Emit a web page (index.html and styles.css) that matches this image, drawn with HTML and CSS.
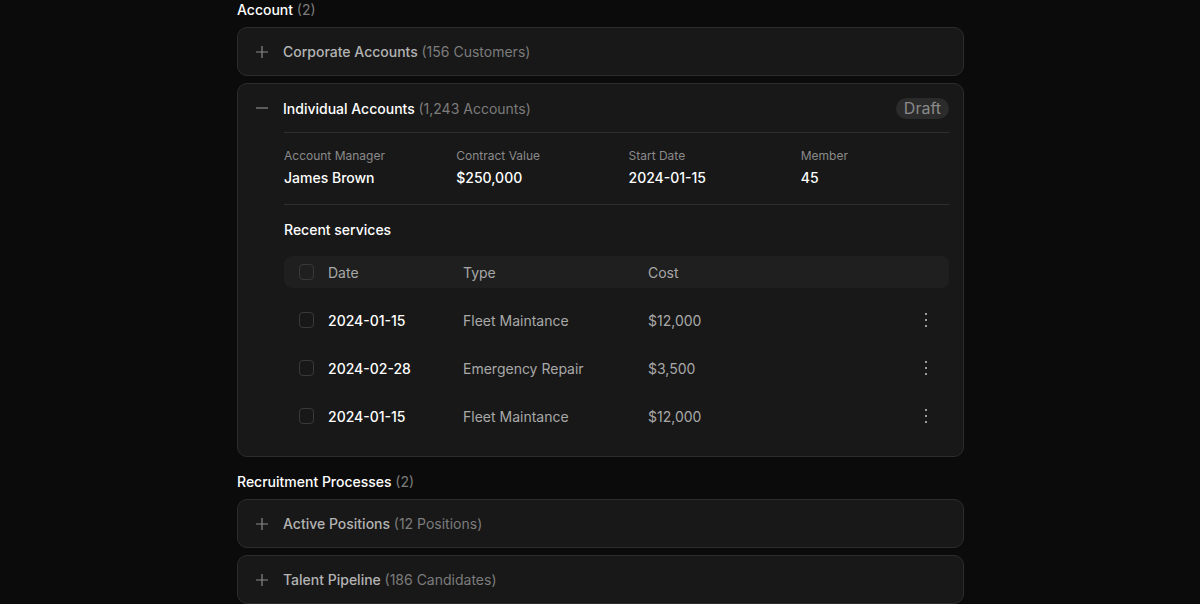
FILE: index.html
```html
<!DOCTYPE html>
<html lang="en">
    <head>
        <meta charset="UTF-8">
        <meta name="viewport" content="width=device-width, initial-scale=1.0">
        <title>Accounts</title>
        <link rel="stylesheet" href="styles.css">
    </head>
    <body>
        <div class="content">
            <h3 class="groupTitle">Account <span class="count">(2)</span></h3>
            <div class="card">
                <div class="cardHeader">
                    <svg class="toggle" width="16" height="16" viewBox="0 0 16 16"><path d="M8 2v12M2 8h12" stroke="currentColor" stroke-width="1.2" fill="none"/></svg>
                    <span class="cardTitle">Corporate Accounts <span class="count">(156 Customers)</span></span>
                </div>
            </div>
            <div class="card open">
                <div class="cardHeader">
                    <svg class="toggle" width="16" height="16" viewBox="0 0 16 16"><path d="M2 8h12" stroke="currentColor" stroke-width="1.2" fill="none"/></svg>
                    <span class="cardTitle">Individual Accounts <span class="count">(1,243 Accounts)</span></span>
                    <span class="badge">Draft</span>
                </div>
                <div class="cardBody">
                    <div class="stats">
                        <div>
                            <div class="statLabel">Account Manager</div>
                            <div class="statValue">James Brown</div>
                        </div>
                        <div>
                            <div class="statLabel">Contract Value</div>
                            <div class="statValue">$250,000</div>
                        </div>
                        <div>
                            <div class="statLabel">Start Date</div>
                            <div class="statValue">2024-01-15</div>
                        </div>
                        <div>
                            <div class="statLabel">Member</div>
                            <div class="statValue">45</div>
                        </div>
                    </div>
                    <h4 class="subTitle">Recent services</h4>
                    <div class="table">
                        <div class="row head">
                            <span class="check"></span>
                            <span class="colDate">Date</span>
                            <span class="colType">Type</span>
                            <span class="colCost">Cost</span>
                        </div>
                        <div class="row">
                            <span class="check"></span>
                            <span class="colDate">2024-01-15</span>
                            <span class="colType">Fleet Maintance</span>
                            <span class="colCost">$12,000</span>
                            <span class="kebab"><i></i><i></i><i></i></span>
                        </div>
                        <div class="row">
                            <span class="check"></span>
                            <span class="colDate">2024-02-28</span>
                            <span class="colType">Emergency Repair</span>
                            <span class="colCost">$3,500</span>
                            <span class="kebab"><i></i><i></i><i></i></span>
                        </div>
                        <div class="row">
                            <span class="check"></span>
                            <span class="colDate">2024-01-15</span>
                            <span class="colType">Fleet Maintance</span>
                            <span class="colCost">$12,000</span>
                            <span class="kebab"><i></i><i></i><i></i></span>
                        </div>
                    </div>
                </div>
            </div>

            <h3 class="groupTitle second">Recruitment Processes <span class="count">(2)</span></h3>
            <div class="card">
                <div class="cardHeader">
                    <svg class="toggle" width="16" height="16" viewBox="0 0 16 16"><path d="M8 2v12M2 8h12" stroke="currentColor" stroke-width="1.2" fill="none"/></svg>
                    <span class="cardTitle">Active Positions <span class="count">(12 Positions)</span></span>
                </div>
            </div>
            <div class="card">
                <div class="cardHeader">
                    <svg class="toggle" width="16" height="16" viewBox="0 0 16 16"><path d="M8 2v12M2 8h12" stroke="currentColor" stroke-width="1.2" fill="none"/></svg>
                    <span class="cardTitle">Talent Pipeline <span class="count">(186 Candidates)</span></span>
                </div>
            </div>
        </div>
    </body>
</html>
```

FILE: styles.css
```css
* {
    box-sizing: border-box;
}
body {
    margin: 0;
    background-color: #0b0b0b;
    color: #fff;
    font-family: Inter, "Noto Sans", sans-serif;
    font-size: 14px;
}
.content {
    width: 727px;
    margin-left: calc(50% - 363px);
}
.groupTitle {
    margin: 0 0 7px;
    height: 20px;
    line-height: 20px;
    font-size: 14px;
    font-weight: 500;
}
.groupTitle.second {
    margin-top: 15px;
}
.count {
    color: #7c7c7c;
    font-weight: 400;
}
.card {
    background-color: #181818;
    border: 1px solid #2c2c2c;
    border-radius: 10px;
    margin-bottom: 7px;
}
.cardHeader {
    display: flex;
    align-items: center;
    height: 47px;
    padding: 0 14px 0 16px;
    gap: 13px;
}
.toggle {
    color: #8a8a8a;
    flex: none;
}
.cardTitle {
    flex: 1;
    font-weight: 500;
    color: #b3b3b3;
}
.card.open .cardTitle {
    color: #fff;
}
.card.open .cardHeader {
    height: 48px;
}
.badge {
    background-color: #2b2b2b;
    color: #8a8a8a;
    font-size: 16px;
    border-radius: 11px;
    padding: 0 8px;
    height: 21px;
    line-height: 21px;
}
.cardBody {
    margin: 0 14px 0 46px;
    padding-bottom: 16px;
}
.stats {
    display: grid;
    grid-template-columns: repeat(4, 1fr);
    gap: 24px;
    border-top: 1px solid #2e2e2e;
    border-bottom: 1px solid #2e2e2e;
    padding: 14px 0 16px;
}
.statLabel {
    font-size: 12px;
    color: #8a8a8a;
    line-height: 18px;
}
.statValue {
    font-weight: 500;
    line-height: 20px;
    margin-top: 3px;
}
.subTitle {
    margin: 15px 0 0;
    font-size: 14px;
    font-weight: 500;
    line-height: 20px;
}
.table {
    margin-top: 16px;
}
.row {
    display: flex;
    align-items: center;
    height: 48px;
    padding: 0 15px;
    color: #a8a8a8;
}
.row.head {
    height: 32px;
    background-color: #1f1f1f;
    border-radius: 8px;
    margin-bottom: 8px;
}
.check {
    width: 15px;
    height: 16px;
    border: 1px solid #393939;
    border-radius: 4px;
    flex: none;
    margin-right: 14px;
}
.colDate {
    width: 135px;
}
.row:not(.head) .colDate {
    color: #fff;
    font-weight: 500;
}
.colType {
    width: 185px;
}
.colCost {
    flex: 1;
}
.kebab {
    display: flex;
    flex-direction: column;
    gap: 4px;
    width: 16px;
    align-items: center;
}
.kebab i {
    width: 2px;
    height: 2px;
    background-color: #9a9a9a;
}
```
